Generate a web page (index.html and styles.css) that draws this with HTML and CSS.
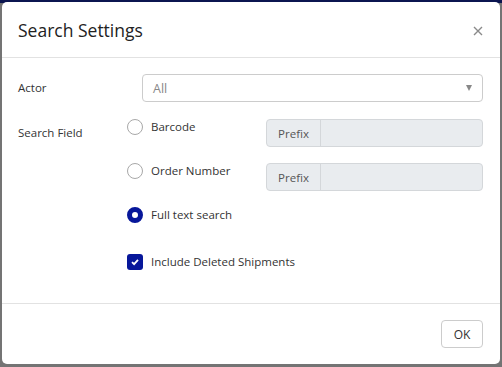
FILE: index.html
```html
<!DOCTYPE html>
<html lang="en">
<head>
    <meta charset="UTF-8">
    <title>Search Settings</title>
    <link rel="stylesheet" href="styles.css">
</head>
<body>
    <div class="modal">
        <div class="modal-header">
            <h2>Search Settings</h2>
            <button class="close" aria-label="Close">
                <svg width="10" height="10" viewBox="0 0 10 10"><path d="M1 1L9 9M9 1L1 9" stroke="#8a8a8a" stroke-width="1.4"/></svg>
            </button>
        </div>

        <div class="modal-body">
            <div class="form-row">
                <label class="row-label">Actor</label>
                <div class="select">
                    <span>All</span>
                    <span class="caret"></span>
                </div>
            </div>

            <div class="form-row search-row">
                <label class="row-label">Search Field</label>
                <div class="options">
                    <div class="option">
                        <label class="radio"><span class="dot"></span>Barcode</label>
                        <div class="input-group">
                            <span class="addon">Prefix</span>
                            <span class="field"></span>
                        </div>
                    </div>
                    <div class="option">
                        <label class="radio"><span class="dot"></span>Order Number</label>
                        <div class="input-group">
                            <span class="addon">Prefix</span>
                            <span class="field"></span>
                        </div>
                    </div>
                    <div class="option">
                        <label class="radio checked"><span class="dot"></span>Full text search</label>
                    </div>
                    <div class="check-option">
                        <label class="checkbox">
                            <span class="box">
                                <svg width="10" height="10" viewBox="0 0 10 10"><path d="M2 5.2L4.1 7.2L8 2.9" fill="none" stroke="#fff" stroke-width="1.8"/></svg>
                            </span>
                            Include Deleted Shipments
                        </label>
                    </div>
                </div>
            </div>
        </div>

        <div class="modal-footer">
            <button class="btn">OK</button>
        </div>
    </div>
</body>
</html>
```

FILE: styles.css
```css
body {
    margin: 0;
    height: 367px;
    overflow: hidden;
    font-family: "Open Sans", "Noto Sans", Arial, sans-serif;
    font-size: 11.5px;
    color: #333;
    background: linear-gradient(#0b1550 0, #0b1550 3px, #747474 3px);
}
.modal {
    margin: 2px 2px 0 2px;
    height: 362px;
    background: white;
    border-radius: 5px;
    display: flex;
    flex-direction: column;
}
.modal-header {
    height: 55px;
    padding: 0 17px 0 16px;
    border-bottom: 1px solid #e2e2e2;
    display: flex;
    align-items: center;
    justify-content: space-between;
}
.modal-header h2 {
    margin: 0;
    font-size: 17.5px;
    font-weight: 400;
    color: #222;
}
.close {
    border: none;
    background: none;
    padding: 0;
    display: flex;
    margin-top: 2px;
}
.modal-body {
    flex: 1;
    padding: 16px 17px 0 16px;
}
.form-row {
    display: grid;
    grid-template-columns: 124px 1fr;
    align-items: start;
}
.row-label {
    line-height: 28px;
}
.search-row {
    margin-top: 17px;
    grid-template-columns: 109px 1fr;
}
.select {
    height: 26px;
    border: 1px solid #ccc;
    border-radius: 4px;
    display: flex;
    align-items: center;
    justify-content: space-between;
    padding: 0 10px 0 10px;
    color: #888;
    font-size: 12.5px;
}
.caret {
    width: 0;
    height: 0;
    border-left: 3.5px solid transparent;
    border-right: 3.5px solid transparent;
    border-top: 6px solid #888;
}
.options {
    display: flex;
    flex-direction: column;
    gap: 16px;
}
.option {
    display: grid;
    grid-template-columns: 139px 1fr;
    min-height: 28px;
}
.check-option {
    margin-top: 3px;
}
.radio, .checkbox {
    display: flex;
    align-items: flex-start;
    gap: 8px;
    line-height: 16px;
    white-space: nowrap;
}
.dot {
    width: 14px;
    height: 14px;
    border: 1px solid #a8a8a8;
    border-radius: 50%;
    flex-shrink: 0;
}
.radio.checked .dot {
    width: 6px;
    height: 6px;
    border: 5px solid #07179a;
    background: white;
}
.box {
    width: 16px;
    height: 16px;
    border-radius: 3px;
    background: #07179a;
    display: flex;
    align-items: center;
    justify-content: center;
    flex-shrink: 0;
}
.input-group {
    height: 26px;
    display: flex;
    background: #e9ecef;
    border: 1px solid #d4d7da;
    border-radius: 4px;
}
.addon {
    width: 53px;
    border-right: 1px solid #d4d7da;
    display: flex;
    align-items: center;
    justify-content: center;
    color: #555;
}
.field {
    flex: 1;
}
.modal-footer {
    height: 60px;
    border-top: 1px solid #e2e2e2;
    display: flex;
    align-items: center;
    justify-content: flex-end;
    padding-right: 17px;
}
.btn {
    width: 42px;
    height: 28px;
    background: white;
    border: 1px solid #ccc;
    border-radius: 4px;
    font-family: inherit;
    font-size: 12px;
    color: #333;
    padding: 0;
}
```
